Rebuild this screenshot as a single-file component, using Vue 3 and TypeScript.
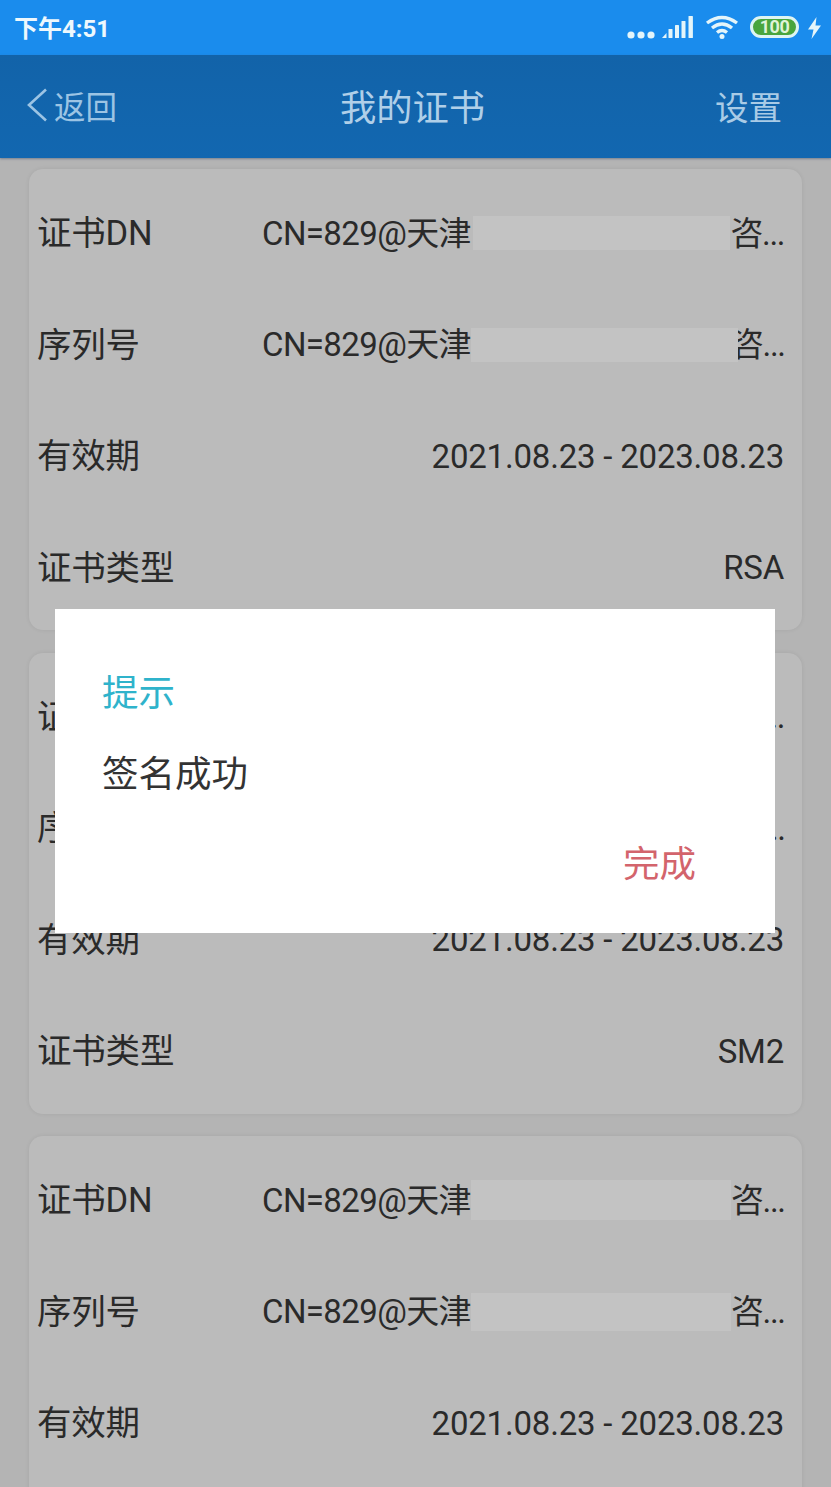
<script setup lang="ts">
interface Row {
  label: string
  value?: string
  mask?: number
  maskH?: number
  overlap?: number
  tail?: string
}
interface Card {
  rows: Row[]
}
const mk = (m1: number, m2: number, h1: number, h2: number, o2: number, type?: string): Row[] => {
  const rows: Row[] = [
    { label: '证书DN', value: 'CN=829@天津', mask: m1, maskH: h1, overlap: 0, tail: '咨...' },
    { label: '序列号', value: 'CN=829@天津', mask: m2, maskH: h2, overlap: o2, tail: '咨...' },
    { label: '有效期', value: '2021.08.23 - 2023.08.23' }
  ]
  if (type) rows.push({ label: '证书类型', value: type })
  return rows
}
const cards: Card[] = [
  { rows: mk(257, 267, 34, 34, 7, 'RSA') },
  { rows: mk(257, 267, 34, 34, 7, 'SM2') },
  { rows: mk(260, 260, 40, 38, 0) }
]
</script>

<template>
  <div class="page">
    <header class="status">
      <span class="time">下午4:51</span>
      <div class="status-icons">
        <svg width="28" height="8" viewBox="0 0 28 8" class="dots">
          <circle cx="4" cy="4" r="3.6" /><circle cx="14" cy="4" r="3.6" /><circle cx="24" cy="4" r="3.6" />
        </svg>
        <svg width="32" height="23" viewBox="0 0 32 23" class="signal">
          <path d="M0 22 L4.5 17 V22 Z" />
          <rect x="6.5" y="13" width="4" height="9" rx="0.6" />
          <rect x="13" y="9" width="4" height="13" rx="0.6" />
          <rect x="19.5" y="5" width="4" height="17" rx="0.6" />
          <rect x="26.5" y="0" width="4.4" height="22" rx="0.6" />
        </svg>
        <svg width="34" height="24" viewBox="0 0 34 24" class="wifi">
          <path d="M2 8 Q17 -3 32 8" />
          <path d="M7 13 Q17 5 27 13" />
          <path d="M12 17.5 Q17 13.5 22 17.5" />
          <circle cx="17" cy="21.5" r="2.5" class="wifi-dot" />
        </svg>
        <div class="battery"><span>100</span></div>
        <svg width="15" height="22" viewBox="0 0 15 22" class="bolt">
          <path d="M9.5 0 L1 12.5 H6.5 L4.5 22 L14 8.5 H8.5 Z" />
        </svg>
      </div>
    </header>

    <nav class="nav">
      <div class="back">
        <svg width="22" height="34" viewBox="0 0 22 34" class="chev">
          <path d="M20 1.5 L3 17 L20 32.5" />
        </svg>
        <span>返回</span>
      </div>
      <div class="title">我的证书</div>
      <div class="setting">设置</div>
    </nav>

    <main class="list">
      <section v-for="(card, c) in cards" :key="c" class="card">
        <div v-for="row in card.rows" :key="row.label" class="row">
          <span class="label">{{ row.label }}</span>
          <div v-if="row.mask" class="value masked">
            <span>{{ row.value }}</span>
            <i
              class="mask"
              :style="{ width: row.mask + 'px', height: row.maskH + 'px', marginRight: -(row.overlap ?? 0) + 'px' }"
            ></i>
            <span class="tail">{{ row.tail }}</span>
          </div>
          <div v-else class="value plain">{{ row.value }}</div>
        </div>
      </section>
    </main>

    <div class="dialog">
      <div class="dlg-title">提示</div>
      <div class="dlg-msg">签名成功</div>
      <div class="dlg-actions"><span>完成</span></div>
    </div>
  </div>
</template>

<style scoped>
.page {
  position: relative;
  width: 831px;
  height: 1487px;
  overflow: hidden;
  background: #b4b4b4;
  font-family: Roboto, "Noto Sans CJK SC", sans-serif;
}
.status {
  height: 55px;
  background: #1a8ced;
  display: flex;
  align-items: center;
  justify-content: space-between;
  padding: 0 9px 0 14px;
  color: #eef8fd;
}
.time {
  font-size: 24px;
  font-weight: 700;
  margin-top: -3px;
}
.status-icons {
  display: flex;
  align-items: center;
}
.dots { fill: #e4f5fa; margin-top: 14px; margin-right: 7px; }
.signal { fill: #e4f5fa; margin-right: 11px; margin-top: -1px; }
.wifi { margin-right: 11px; margin-top: -1px; }
.wifi path { fill: none; stroke: #e4f5fa; stroke-width: 3.4; }
.wifi .wifi-dot { fill: #e4f5fa; }
.battery {
  width: 49px;
  height: 22px;
  box-sizing: border-box;
  border: 3px solid #def4f2;
  border-radius: 11px;
  background: #49a53d;
  display: flex;
  align-items: center;
  justify-content: center;
  margin-right: 8px;
  margin-top: -1px;
}
.battery span {
  font-size: 18px;
  font-weight: 700;
  line-height: 1;
  letter-spacing: -0.5px;
  color: #dff3d8;
}
.bolt { fill: #e4f5fa; }
.nav {
  height: 103px;
  box-sizing: border-box;
  padding: 0 49px 3px 26px;
  background: linear-gradient(#1263a9, #1267b0);
  display: flex;
  align-items: center;
  justify-content: space-between;
  color: #a5c9e6;
  box-shadow: 0 1px 2px rgba(60, 80, 110, 0.5);
  position: relative;
}
.back {
  display: flex;
  align-items: center;
  font-size: 31.5px;
  gap: 6px;
  color: #9cc4e4;
}
.chev { fill: none; stroke: #9cc4e4; stroke-width: 2.6; }
.title {
  font-size: 36.3px;
  color: #b0cfe8;
  margin-left: -7px;
}
.setting {
  font-size: 33.5px;
  color: #a9cbe6;
}
.list {
  padding: 11px 29px 0;
  display: flex;
  flex-direction: column;
  gap: 22.5px;
}
.card {
  background: #bbbbbb;
  border-radius: 14px;
  padding: 8.5px 18px 6.5px 8px;
  min-height: 461px;
  box-sizing: border-box;
  box-shadow: 0 0 4px rgba(0, 0, 0, 0.08);
  flex: none;
}
.row {
  height: 111.5px;
  display: flex;
  align-items: center;
  color: #2a2a2a;
  font-size: 34.5px;
  line-height: 1;
}
.label {
  width: 225px;
  flex: none;
  letter-spacing: -0.2px;
}
.value {
  flex: 1;
  min-width: 0;
}
.masked {
  display: flex;
  align-items: center;
  font-size: 33px;
}
.masked > span { white-space: nowrap; letter-spacing: -0.6px; }
.mask {
  display: block;
  background: #c3c3c3;
  flex: none;
  margin-left: auto;
  position: relative;
  z-index: 1;
}
.masked > .tail { letter-spacing: -1.4px; }
.plain {
  text-align: right;
  font-size: 33px;
  letter-spacing: -0.2px;
}
.dialog {
  position: absolute;
  z-index: 2;
  left: 55px;
  top: 609px;
  width: 720px;
  height: 324px;
  box-sizing: border-box;
  padding: 64px 79px 0 47px;
  background: #ffffff;
  font-size: 36.5px;
  line-height: 42px;
}
.dlg-title { color: #2fb3cb; }
.dlg-msg {
  color: #333333;
  margin-top: 39px;
}
.dlg-actions {
  margin-top: 48px;
  text-align: right;
  color: #d3646c;
}
</style>
